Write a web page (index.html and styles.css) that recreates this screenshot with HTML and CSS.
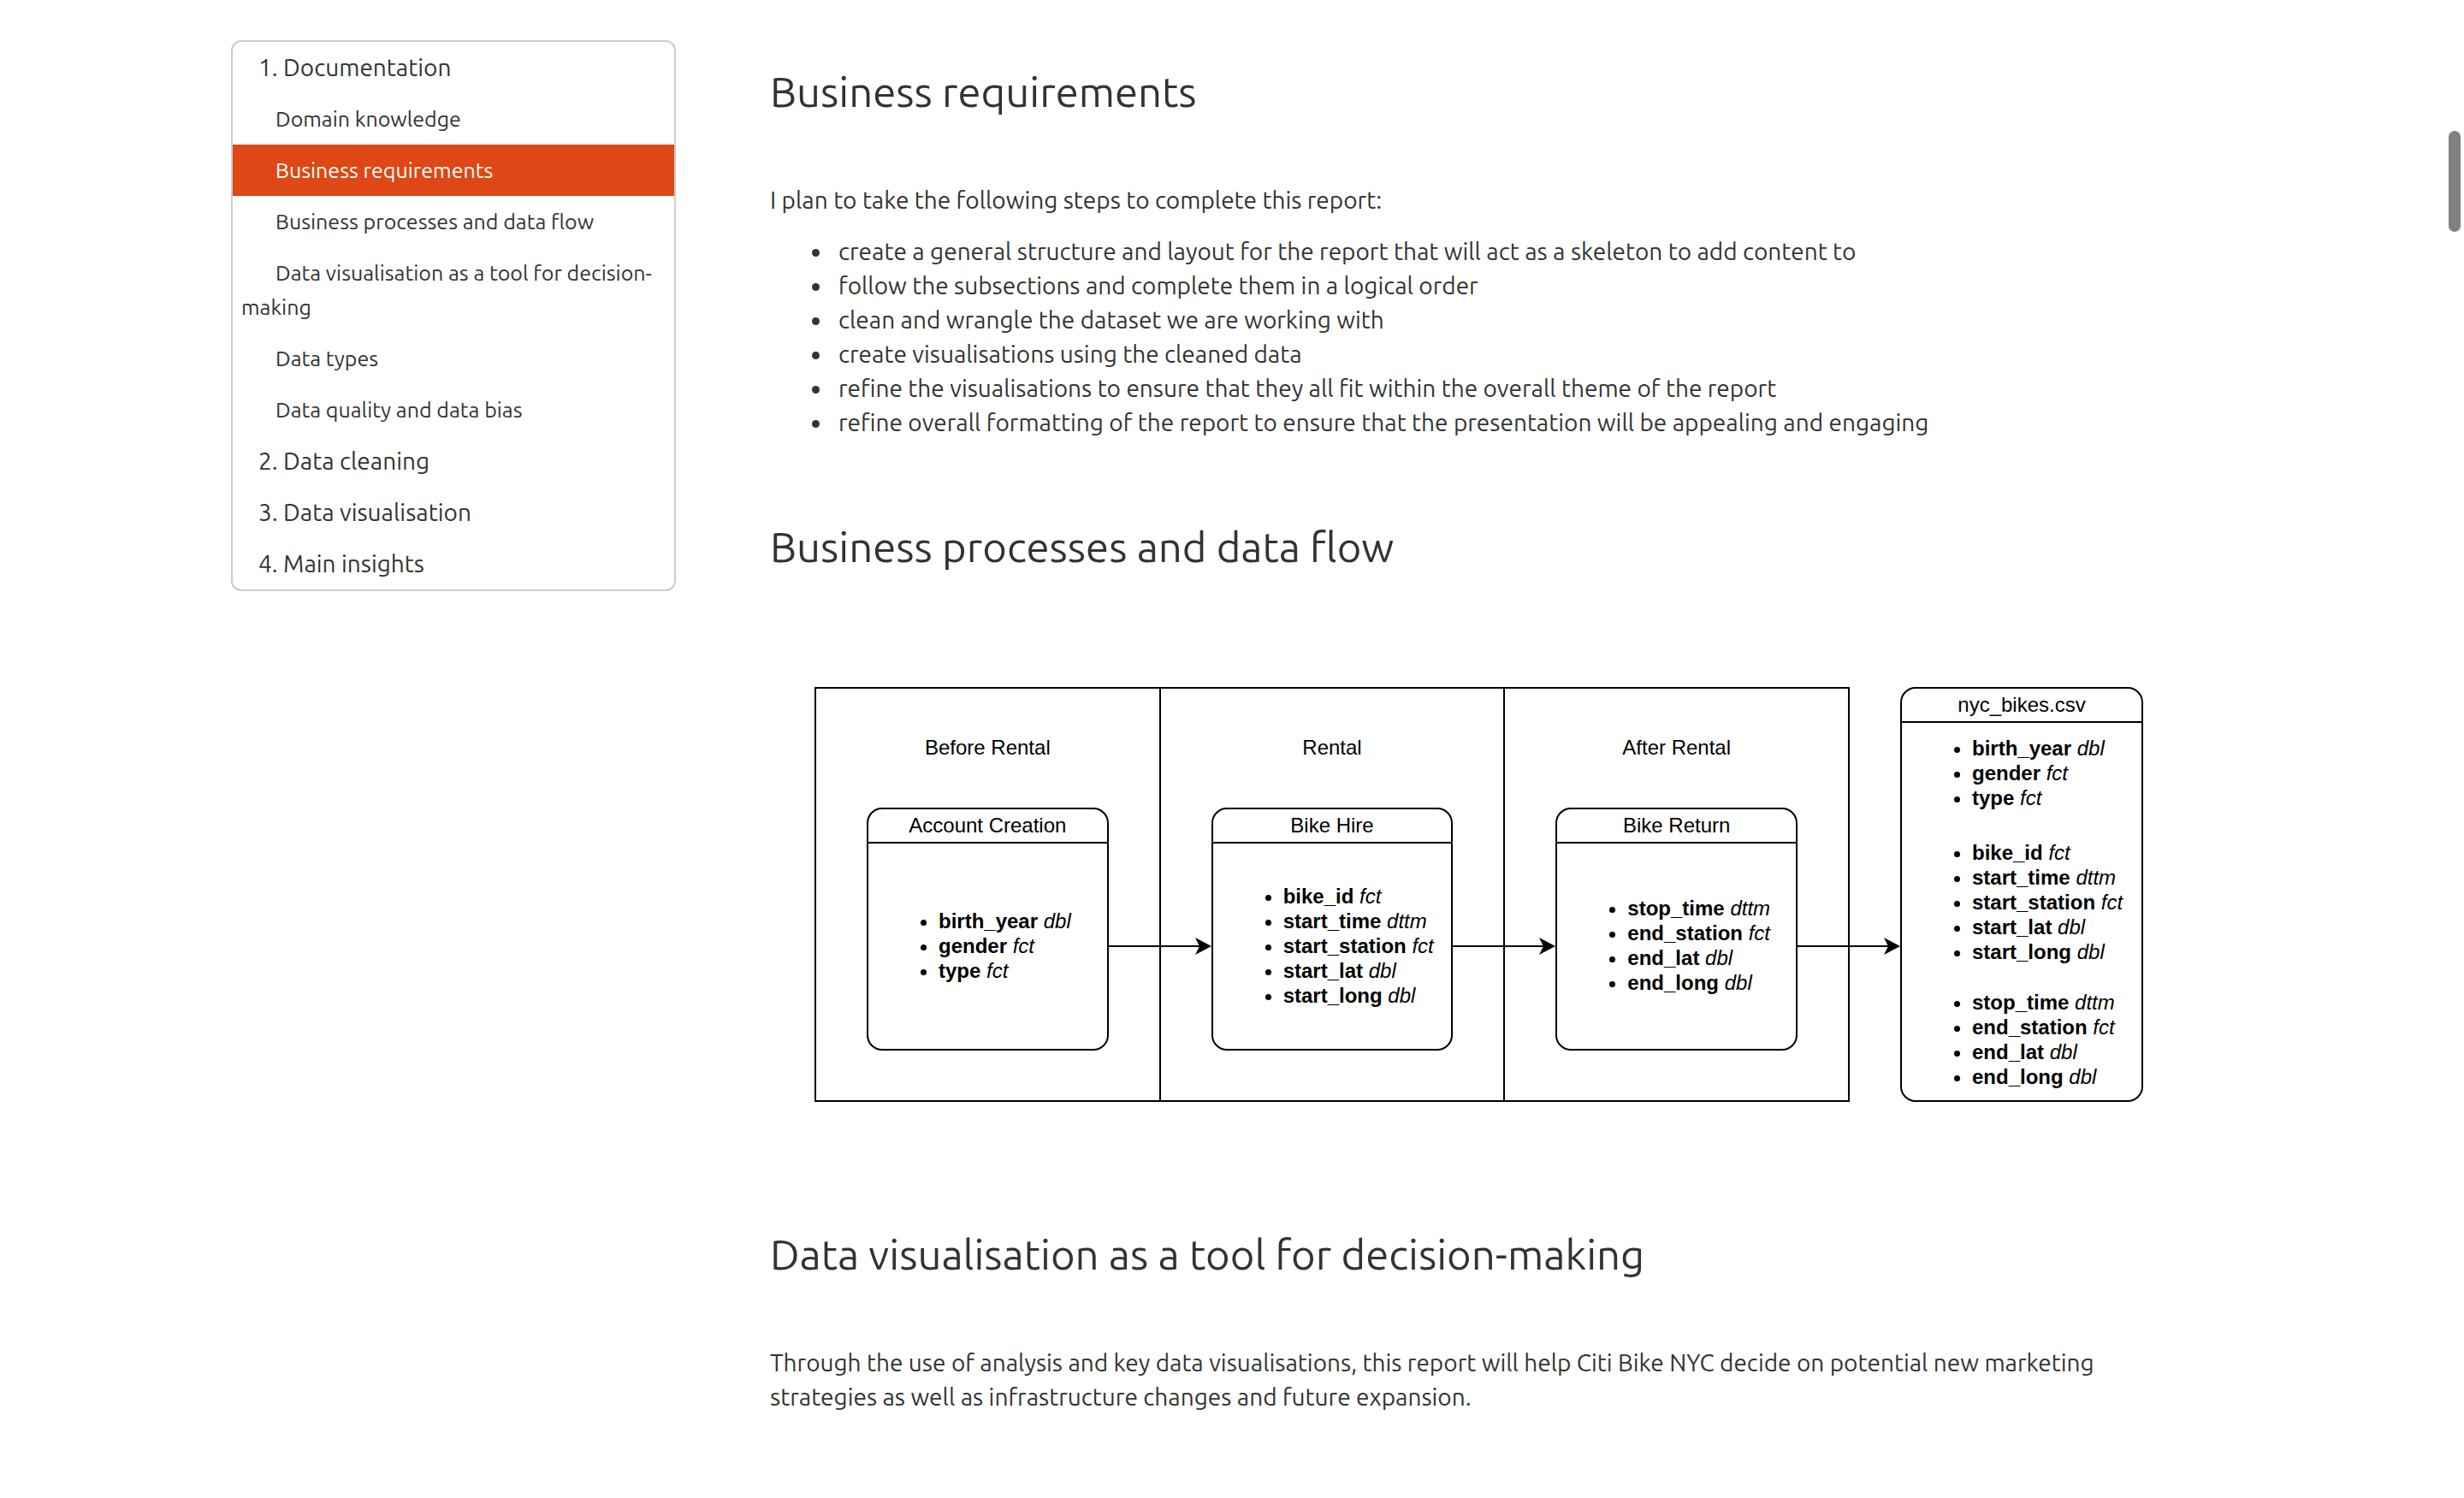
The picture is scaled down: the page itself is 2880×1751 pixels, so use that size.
FILE: index.html
```html
<!DOCTYPE html>
<html lang="en">
<head>
<meta charset="utf-8">
<title>Citi Bike NYC report</title>
<link rel="stylesheet" href="styles.css">
</head>
<body>
<div class="container">
  <nav class="toc" aria-label="Table of contents">
    <a class="toc-item" href="#documentation">1. Documentation</a>
    <a class="toc-item toc-sub" href="#domain">Domain knowledge</a>
    <a class="toc-item toc-sub active" href="#requirements" aria-current="true">Business requirements</a>
    <a class="toc-item toc-sub" href="#processes">Business processes and data flow</a>
    <a class="toc-item toc-sub" href="#decision">Data visualisation as a tool for decision-making</a>
    <a class="toc-item toc-sub" href="#types">Data types</a>
    <a class="toc-item toc-sub" href="#quality">Data quality and data bias</a>
    <a class="toc-item" href="#cleaning">2. Data cleaning</a>
    <a class="toc-item" href="#visualisation">3. Data visualisation</a>
    <a class="toc-item" href="#insights">4. Main insights</a>
  </nav>

  <main class="content">
    <section id="requirements">
      <h2>Business requirements</h2>
      <p>I plan to take the following steps to complete this report:</p>
      <ul class="steps">
        <li>create a general structure and layout for the report that will act as a skeleton to add content to</li>
        <li>follow the subsections and complete them in a logical order</li>
        <li>clean and wrangle the dataset we are working with</li>
        <li>create visualisations using the cleaned data</li>
        <li>refine the visualisations to ensure that they all fit within the overall theme of the report</li>
        <li>refine overall formatting of the report to ensure that the presentation will be appealing and engaging</li>
      </ul>
    </section>

    <section id="processes">
      <h2>Business processes and data flow</h2>
      <figure class="flow">
        <div class="stages">
          <div class="stage">
            <div class="stage-title">Before Rental</div>
            <div class="box">
              <div class="box-title">Account Creation</div>
              <div class="box-body">
                <ul>
                  <li><b>birth_year</b> <i>dbl</i></li>
                  <li><b>gender</b> <i>fct</i></li>
                  <li><b>type</b> <i>fct</i></li>
                </ul>
              </div>
              <svg class="arrow" viewBox="0 0 122 20" aria-hidden="true"><path class="shaft" d="M0 10H112"/><path d="M122 10L103 0L108 10L103 20Z"/></svg>
            </div>
          </div>
          <div class="stage">
            <div class="stage-title">Rental</div>
            <div class="box">
              <div class="box-title">Bike Hire</div>
              <div class="box-body">
                <ul>
                  <li><b>bike_id</b> <i>fct</i></li>
                  <li><b>start_time</b> <i>dttm</i></li>
                  <li><b>start_station</b> <i>fct</i></li>
                  <li><b>start_lat</b> <i>dbl</i></li>
                  <li><b>start_long</b> <i>dbl</i></li>
                </ul>
              </div>
              <svg class="arrow" viewBox="0 0 122 20" aria-hidden="true"><path class="shaft" d="M0 10H112"/><path d="M122 10L103 0L108 10L103 20Z"/></svg>
            </div>
          </div>
          <div class="stage">
            <div class="stage-title">After Rental</div>
            <div class="box">
              <div class="box-title">Bike Return</div>
              <div class="box-body">
                <ul>
                  <li><b>stop_time</b> <i>dttm</i></li>
                  <li><b>end_station</b> <i>fct</i></li>
                  <li><b>end_lat</b> <i>dbl</i></li>
                  <li><b>end_long</b> <i>dbl</i></li>
                </ul>
              </div>
              <svg class="arrow" viewBox="0 0 122 20" aria-hidden="true"><path class="shaft" d="M0 10H112"/><path d="M122 10L103 0L108 10L103 20Z"/></svg>
            </div>
          </div>
        </div>
        <div class="box csv">
          <div class="box-title">nyc_bikes.csv</div>
          <div class="box-body">
            <ul class="account-fields">
              <li><b>birth_year</b> <i>dbl</i></li>
              <li><b>gender</b> <i>fct</i></li>
              <li><b>type</b> <i>fct</i></li>
            </ul>
            <ul class="hire-fields">
              <li><b>bike_id</b> <i>fct</i></li>
              <li><b>start_time</b> <i>dttm</i></li>
              <li><b>start_station</b> <i>fct</i></li>
              <li><b>start_lat</b> <i>dbl</i></li>
              <li><b>start_long</b> <i>dbl</i></li>
            </ul>
            <ul>
              <li><b>stop_time</b> <i>dttm</i></li>
              <li><b>end_station</b> <i>fct</i></li>
              <li><b>end_lat</b> <i>dbl</i></li>
              <li><b>end_long</b> <i>dbl</i></li>
            </ul>
          </div>
        </div>
      </figure>
    </section>

    <section id="decision">
      <h2>Data visualisation as a tool for decision-making</h2>
      <p>Through the use of analysis and key data visualisations, this report will help Citi Bike NYC decide on potential new marketing strategies as well as infrastructure changes and future expansion.</p>
    </section>
  </main>
</div>
<div class="scroll-thumb" aria-hidden="true"></div>
</body>
</html>
```

FILE: styles.css
```css
* { box-sizing: border-box; }

body {
  margin: 0;
  background: #fff;
  color: #333;
  font-family: Ubuntu, "Noto Sans", sans-serif;
  font-size: 28px;
  font-weight: 400;
  line-height: 40px;
}

.container {
  display: flex;
  align-items: flex-start;
  gap: 110px;
  max-width: 2340px;
  margin: 0 auto;
}

.toc {
  position: sticky;
  top: 47px;
  flex: 0 0 520px;
  margin-top: 47px;
  border: 2px solid #ccc;
  border-radius: 12px;
  overflow: hidden;
}

.toc-item {
  display: block;
  padding: 10px;
  color: #333;
  text-decoration: none;
  text-indent: 20px;
}

.toc-sub {
  font-size: 25px;
  text-indent: 40px;
}

.toc-item.active {
  background: #dd4814;
  color: #fff;
}

.content {
  flex: 1;
  padding: 81px 60px 100px 0;
}

section + section { margin-top: 99px; }

h2 {
  margin: 0 0 81px;
  font-size: 49px;
  font-weight: 400;
  line-height: 52px;
}

p { margin: 0 0 20px; }

ul { margin: 0; }

.steps { padding-left: 73px; }

.steps li { padding-left: 7px; }

.flow {
  display: flex;
  gap: 59px;
  margin: 138px 45px 152px 52px;
  color: #000;
  font-family: Helvetica, "Liberation Sans", sans-serif;
  font-size: 24px;
  line-height: 29px;
}

.stages {
  display: flex;
  flex: 1;
  border: 2px solid #000;
}

.stage {
  display: flex;
  flex: 1;
  flex-direction: column;
  padding: 0 59px 58px;
}

.stage + .stage { border-left: 2px solid #000; }

.stage-title {
  padding: 54px 0 56px;
  text-align: center;
}

.box {
  position: relative;
  display: flex;
  flex-direction: column;
  height: 284px;
  border: 2px solid #000;
  border-radius: 18px;
}

.box-title {
  padding: 4px 0 5px;
  border-bottom: 2px solid #000;
  text-align: center;
}

.box-body {
  display: flex;
  flex: 1;
  flex-direction: column;
  justify-content: center;
  padding-bottom: 2px;
  white-space: nowrap;
}

.box-body ul { padding-left: 82px; }

.csv {
  flex: 0 0 284px;
  height: auto;
}

.csv .box-body {
  justify-content: flex-start;
  padding-top: 15px;
}

.account-fields { margin-bottom: 35px; }

.hire-fields { margin-bottom: 30px; }

.arrow {
  position: absolute;
  top: 150px;
  left: 100%;
  width: 122px;
  height: 20px;
}

.shaft {
  stroke: #000;
  stroke-width: 2;
}

.scroll-thumb {
  position: fixed;
  top: 153px;
  right: 4px;
  width: 14px;
  height: 118px;
  border-radius: 7px;
  background: #808080;
}
```
